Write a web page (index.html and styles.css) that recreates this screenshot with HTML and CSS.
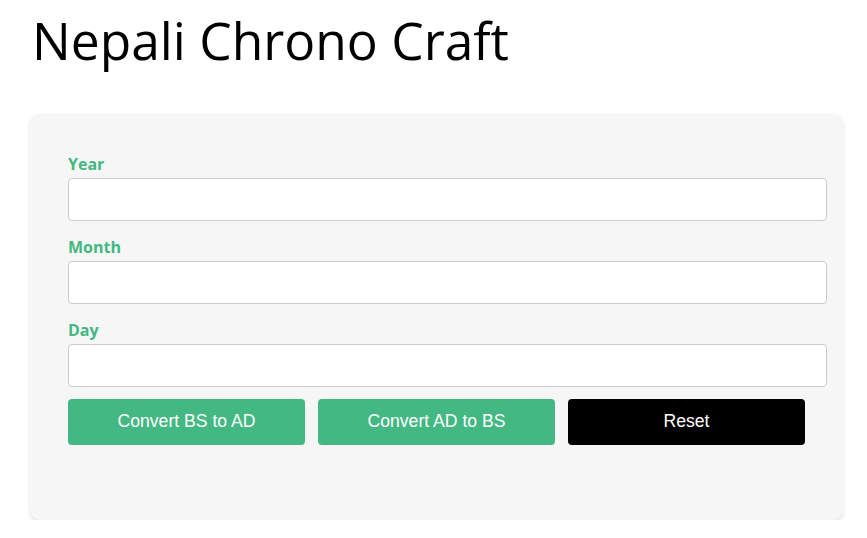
FILE: index.html
```html
<!DOCTYPE html>
<html lang="en">
<head>
<meta charset="utf-8">
<title>Nepali Chrono Craft</title>
<link rel="stylesheet" href="styles.css">
</head>
<body>
<h1 class="title">Nepali Chrono Craft</h1>
<div class="card">
  <form class="form">
    <label class="field-label" for="year">Year</label>
    <input class="field-input" id="year" type="text">
    <label class="field-label" for="month">Month</label>
    <input class="field-input" id="month" type="text">
    <label class="field-label" for="day">Day</label>
    <input class="field-input field-last" id="day" type="text">
    <div class="actions">
      <button type="button" class="btn btn-green">Convert BS to AD</button>
      <button type="button" class="btn btn-green">Convert AD to BS</button>
      <button type="button" class="btn btn-black">Reset</button>
    </div>
  </form>
</div>
</body>
</html>
```
FILE: styles.css
```css
html, body {
  margin: 0;
  background: #ffffff;
}
body {
  padding: 0 24px 0 30px;
  font-family: "Open Sans", "Noto Sans", sans-serif;
}
.title {
  margin: 0;
  padding-left: 2px;
  font-weight: 400;
  font-size: 51.5px;
  line-height: 80px;
  color: #000;
  margin-bottom: 34px;
}
.card {
  width: 813px;
  background: #f6f6f6;
  border-radius: 10px;
  box-shadow: 0 2px 4px rgba(0,0,0,0.12);
  padding: 38px 16px 76px 38px;
  height: 406px;
  box-sizing: border-box;
}
.form {
  display: flex;
  flex-direction: column;
}
.field-label {
  display: block;
  font-weight: 700;
  font-size: 16px;
  line-height: 20px;
  color: #43b883;
  padding-top: 2px;
  margin-bottom: 4px;
}
.field-input {
  display: block;
  height: 43px;
  box-sizing: border-box;
  border: 1px solid #cccccc;
  border-radius: 4px;
  background: #fff;
  margin: 0 0 14px 0;
  font-size: 16px;
}
.field-last {
  margin-bottom: 12px;
}
.actions {
  display: flex;
  gap: 13px;
}
.btn {
  width: 237px;
  height: 46px;
  border: none;
  border-radius: 4px;
  color: #fff;
  font-family: "Liberation Sans", Arial, sans-serif;
  font-size: 17.6px;
  padding: 0 0 2px;
}
.btn-green { background: #43b883; }
.btn-black { background: #000; }
```
